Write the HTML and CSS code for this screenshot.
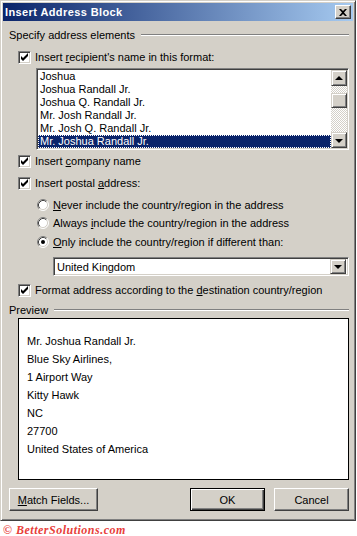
FILE: index.html
```html
<!DOCTYPE html>
<html lang="en">

<head>
    <meta charset="UTF-8">
    <title>Insert Address Block</title>
    <link rel="stylesheet" href="styles.css">
</head>

<body>

    <div class="dialog">
        <div class="titlebar">
            <span class="title">Insert Address Block</span>
            <span class="close-btn">
                <svg width="8" height="7" viewBox="0 0 8 7">
                    <path d="M0 0h2l2 2l2-2h2l-3 3.5l3 3.5h-2l-2-2l-2 2h-2l3-3.5z" fill="#000"/>
                </svg>
            </span>
        </div>

        <div class="content">
            <div class="group-head head-first">
                <span>Specify address elements</span>
                <span class="etched"></span>
            </div>

            <div class="check-row row-1">
                <span class="cb checked"></span>
                <span class="label">Insert <u>r</u>ecipient's name in this format:</span>
            </div>

            <div class="listbox">
                <div class="list-items">
                    <div class="item">Joshua</div>
                    <div class="item">Joshua Randall Jr.</div>
                    <div class="item">Joshua Q. Randall Jr.</div>
                    <div class="item">Mr. Josh Randall Jr.</div>
                    <div class="item">Mr. Josh Q. Randall Jr.</div>
                    <div class="item selected">Mr. Joshua Randall Jr.</div>
                </div>
                <div class="vscroll">
                    <span class="sbtn"><span class="arrow-up"></span></span>
                    <span class="track-a"></span>
                    <span class="thumb"></span>
                    <span class="track-b"></span>
                    <span class="sbtn"><span class="arrow-down"></span></span>
                </div>
            </div>

            <div class="check-row row-company">
                <span class="cb checked"></span>
                <span class="label">Insert <u>c</u>ompany name</span>
            </div>

            <div class="check-row row-postal">
                <span class="cb checked"></span>
                <span class="label">Insert postal <u>a</u>ddress:</span>
            </div>

            <div class="radio-row radio-1">
                <span class="radio"></span>
                <span class="label"><u>N</u>ever include the country/region in the address</span>
            </div>
            <div class="radio-row radio-2">
                <span class="radio"></span>
                <span class="label">Always <u>i</u>nclude the country/region in the address</span>
            </div>
            <div class="radio-row radio-3">
                <span class="radio on"></span>
                <span class="label"><u>O</u>nly include the country/region if different than:</span>
            </div>

            <div class="combo">
                <span class="combo-text">United Kingdom</span>
                <span class="sbtn combo-btn"><span class="arrow-down"></span></span>
            </div>

            <div class="check-row row-format">
                <span class="cb checked"></span>
                <span class="label">Format address according to the <u>d</u>estination country/region</span>
            </div>

            <div class="group-head head-preview">
                <span>Preview</span>
                <span class="etched"></span>
            </div>

            <div class="preview">
                <div>Mr. Joshua Randall Jr.</div>
                <div>Blue Sky Airlines,</div>
                <div>1 Airport Way</div>
                <div>Kitty Hawk</div>
                <div>NC</div>
                <div>27700</div>
                <div>United States of America</div>
            </div>

            <div class="buttons">
                <span class="btn btn-match"><u>M</u>atch Fields...</span>
                <span class="btn btn-default">OK</span>
                <span class="btn btn-cancel">Cancel</span>
            </div>
        </div>
    </div>

    <div class="copyright">&copy; BetterSolutions.com</div>

</body>

</html>
```

FILE: styles.css
```css
body {
    margin: 0;
    padding: 0;
    background-color: #fff;
    font-family: "Liberation Sans", Arial, sans-serif;
    font-size: 11px;
    color: #000;
}

u {
    text-decoration: underline;
    text-underline-offset: 1px;
}

.dialog {
    box-sizing: border-box;
    width: 356px;
    height: 521px;
    padding: 2px;
    background-color: #d4d0c8;
    border: 1px solid;
    border-color: #d4d0c8 #404040 #404040 #d4d0c8;
    box-shadow: inset 1px 1px #fff, inset -1px -1px #808080;
}

.titlebar {
    height: 18px;
    display: flex;
    align-items: center;
    justify-content: space-between;
    background: linear-gradient(to right, #0a246a, #a6caf0);
}

.title {
    padding-left: 2px;
    color: #fff;
    font-weight: bold;
    font-size: 11px;
    letter-spacing: 0.4px;
}

.close-btn {
    box-sizing: border-box;
    width: 16px;
    height: 14px;
    margin-right: 2px;
    display: flex;
    align-items: center;
    justify-content: center;
    background-color: #d4d0c8;
    border: 1px solid;
    border-color: #fff #404040 #404040 #fff;
    box-shadow: inset -1px -1px #808080;
}

.content {
    padding: 0 4px 0 6px;
}

/* group headers with etched line */
.group-head {
    height: 14px;
    display: flex;
    align-items: center;
}

.etched {
    flex: 1;
    height: 0;
    margin-left: 6px;
    border-top: 1px solid #808080;
    border-bottom: 1px solid #fff;
}

.head-first {
    margin-top: 7px;
}

.head-preview {
    margin-top: 6px;
}

/* checkboxes */
.check-row {
    height: 14px;
    display: flex;
    align-items: center;
    padding-left: 9px;
}

.check-row .label {
    margin-left: 4px;
}

.cb {
    box-sizing: border-box;
    width: 13px;
    height: 13px;
    flex-shrink: 0;
    background-color: #fff;
    border: 1px solid;
    border-color: #808080 #fff #fff #808080;
    box-shadow: inset 1px 1px #404040, inset -1px -1px #d4d0c8;
}

.cb.checked {
    background-image: url("data:image/svg+xml,%3Csvg xmlns='http://www.w3.org/2000/svg' width='11' height='11' viewBox='0 0 11 11'%3E%3Cpath d='M2 4v3l2 2l5-5v-3l-5 5z' fill='%23000'/%3E%3C/svg%3E");
    background-position: 0 0;
    background-repeat: no-repeat;
}

.row-1 {
    margin-top: 8px;
}

.row-company {
    margin-top: 4px;
}

.row-postal {
    margin-top: 8px;
}

.row-format {
    margin-top: 7px;
}

/* list box */
.listbox {
    box-sizing: border-box;
    display: flex;
    height: 82px;
    margin: 4px 0 0 27px;
    background-color: #fff;
    border: 1px solid;
    border-color: #808080 #fff #fff #808080;
    box-shadow: inset 1px 1px #404040, inset -1px -1px #d4d0c8;
    padding: 1px;
}

.list-items {
    flex: 1;
}

.item {
    height: 13px;
    line-height: 13px;
    padding-left: 2px;
    white-space: nowrap;
}

.item.selected {
    box-sizing: border-box;
    background-color: #0a246a;
    color: #fff;
    outline: 1px dotted #fff;
    outline-offset: -1px;
    padding-left: 2px;
}

.vscroll {
    width: 16px;
    display: flex;
    flex-direction: column;
}

.sbtn {
    box-sizing: border-box;
    width: 16px;
    height: 16px;
    display: flex;
    align-items: center;
    justify-content: center;
    background-color: #d4d0c8;
    border: 1px solid;
    border-color: #d4d0c8 #404040 #404040 #d4d0c8;
    box-shadow: inset 1px 1px #fff, inset -1px -1px #808080;
    flex-shrink: 0;
}

.track-a,
.track-b {
    background-color: #fff;
    background-image: repeating-conic-gradient(#d4d0c8 0 25%, #fff 0 50%);
    background-size: 2px 2px;
}

.track-a {
    height: 7px;
}

.track-b {
    flex: 1;
}

.thumb {
    box-sizing: border-box;
    height: 15px;
    background-color: #d4d0c8;
    border: 1px solid;
    border-color: #d4d0c8 #404040 #404040 #d4d0c8;
    box-shadow: inset 1px 1px #fff, inset -1px -1px #808080;
}

.arrow-up,
.arrow-down {
    width: 0;
    height: 0;
    border-left: 4px solid transparent;
    border-right: 4px solid transparent;
}

.arrow-up {
    border-bottom: 4px solid #000;
}

.arrow-down {
    border-top: 4px solid #000;
    margin-top: 1px;
}

/* radio buttons */
.radio-row {
    height: 14px;
    display: flex;
    align-items: center;
    padding-left: 28px;
}

.radio-row .label {
    margin-left: 4px;
}

.radio {
    width: 12px;
    height: 12px;
    flex-shrink: 0;
    background-image: url("data:image/svg+xml,%3Csvg xmlns='http://www.w3.org/2000/svg' width='12' height='12' viewBox='0 0 12 12'%3E%3Ccircle cx='6' cy='6' r='5' fill='%23fff'/%3E%3Cpath d='M2.11 9.89A5.5 5.5 0 0 1 9.89 2.11' fill='none' stroke='%23808080'/%3E%3Cpath d='M9.89 2.11A5.5 5.5 0 0 1 2.11 9.89' fill='none' stroke='%23fff'/%3E%3Cpath d='M2.82 9.18A4.5 4.5 0 0 1 9.18 2.82' fill='none' stroke='%23404040'/%3E%3Cpath d='M9.18 2.82A4.5 4.5 0 0 1 2.82 9.18' fill='none' stroke='%23d4d0c8'/%3E%3C/svg%3E");
}

.radio.on {
    background-image: url("data:image/svg+xml,%3Csvg xmlns='http://www.w3.org/2000/svg' width='12' height='12' viewBox='0 0 12 12'%3E%3Ccircle cx='6' cy='6' r='5' fill='%23fff'/%3E%3Cpath d='M2.11 9.89A5.5 5.5 0 0 1 9.89 2.11' fill='none' stroke='%23808080'/%3E%3Cpath d='M9.89 2.11A5.5 5.5 0 0 1 2.11 9.89' fill='none' stroke='%23fff'/%3E%3Cpath d='M2.82 9.18A4.5 4.5 0 0 1 9.18 2.82' fill='none' stroke='%23404040'/%3E%3Cpath d='M9.18 2.82A4.5 4.5 0 0 1 2.82 9.18' fill='none' stroke='%23d4d0c8'/%3E%3Ccircle cx='6' cy='6' r='2' fill='%23000'/%3E%3C/svg%3E");
}

.radio-1 {
    margin-top: 8px;
}

.radio-2 {
    margin-top: 4px;
}

.radio-3 {
    margin-top: 5px;
}

/* combo box */
.combo {
    box-sizing: border-box;
    height: 19px;
    margin: 8px 0 0 44px;
    display: flex;
    align-items: center;
    padding: 2px;
    background-color: #fff;
    border: 1px solid;
    border-color: #808080 #fff #fff #808080;
    box-shadow: inset 1px 1px #404040, inset -1px -1px #d4d0c8;
}

.combo-text {
    flex: 1;
    padding-left: 1px;
}

.combo-btn {
    height: 15px;
}

/* preview */
.preview {
    box-sizing: border-box;
    height: 162px;
    margin: 1px 0 0 9px;
    padding: 13px 0 0 8px;
    background-color: #fff;
    border: 1px solid #000;
    line-height: 18px;
}

/* buttons */
.buttons {
    display: flex;
    margin-top: 8px;
}

.btn {
    box-sizing: border-box;
    height: 23px;
    width: 75px;
    display: flex;
    align-items: center;
    justify-content: center;
    background-color: #d4d0c8;
    border: 1px solid;
    border-color: #fff #404040 #404040 #fff;
    box-shadow: inset -1px -1px #808080;
}

.btn-match {
    width: 89px;
}

.btn-default {
    margin-left: auto;
    border: 1px solid #000;
    box-shadow: inset 1px 1px #fff, inset -1px -1px #404040, inset -2px -2px #808080;
}

.btn-cancel {
    margin-left: 9px;
}

.copyright {
    margin: 3px 0 0 3px;
    font-family: "Liberation Serif", "Times New Roman", serif;
    font-weight: bold;
    font-style: italic;
    font-size: 12px;
    line-height: 12px;
    letter-spacing: 0.5px;
    color: #e8403a;
}
```
